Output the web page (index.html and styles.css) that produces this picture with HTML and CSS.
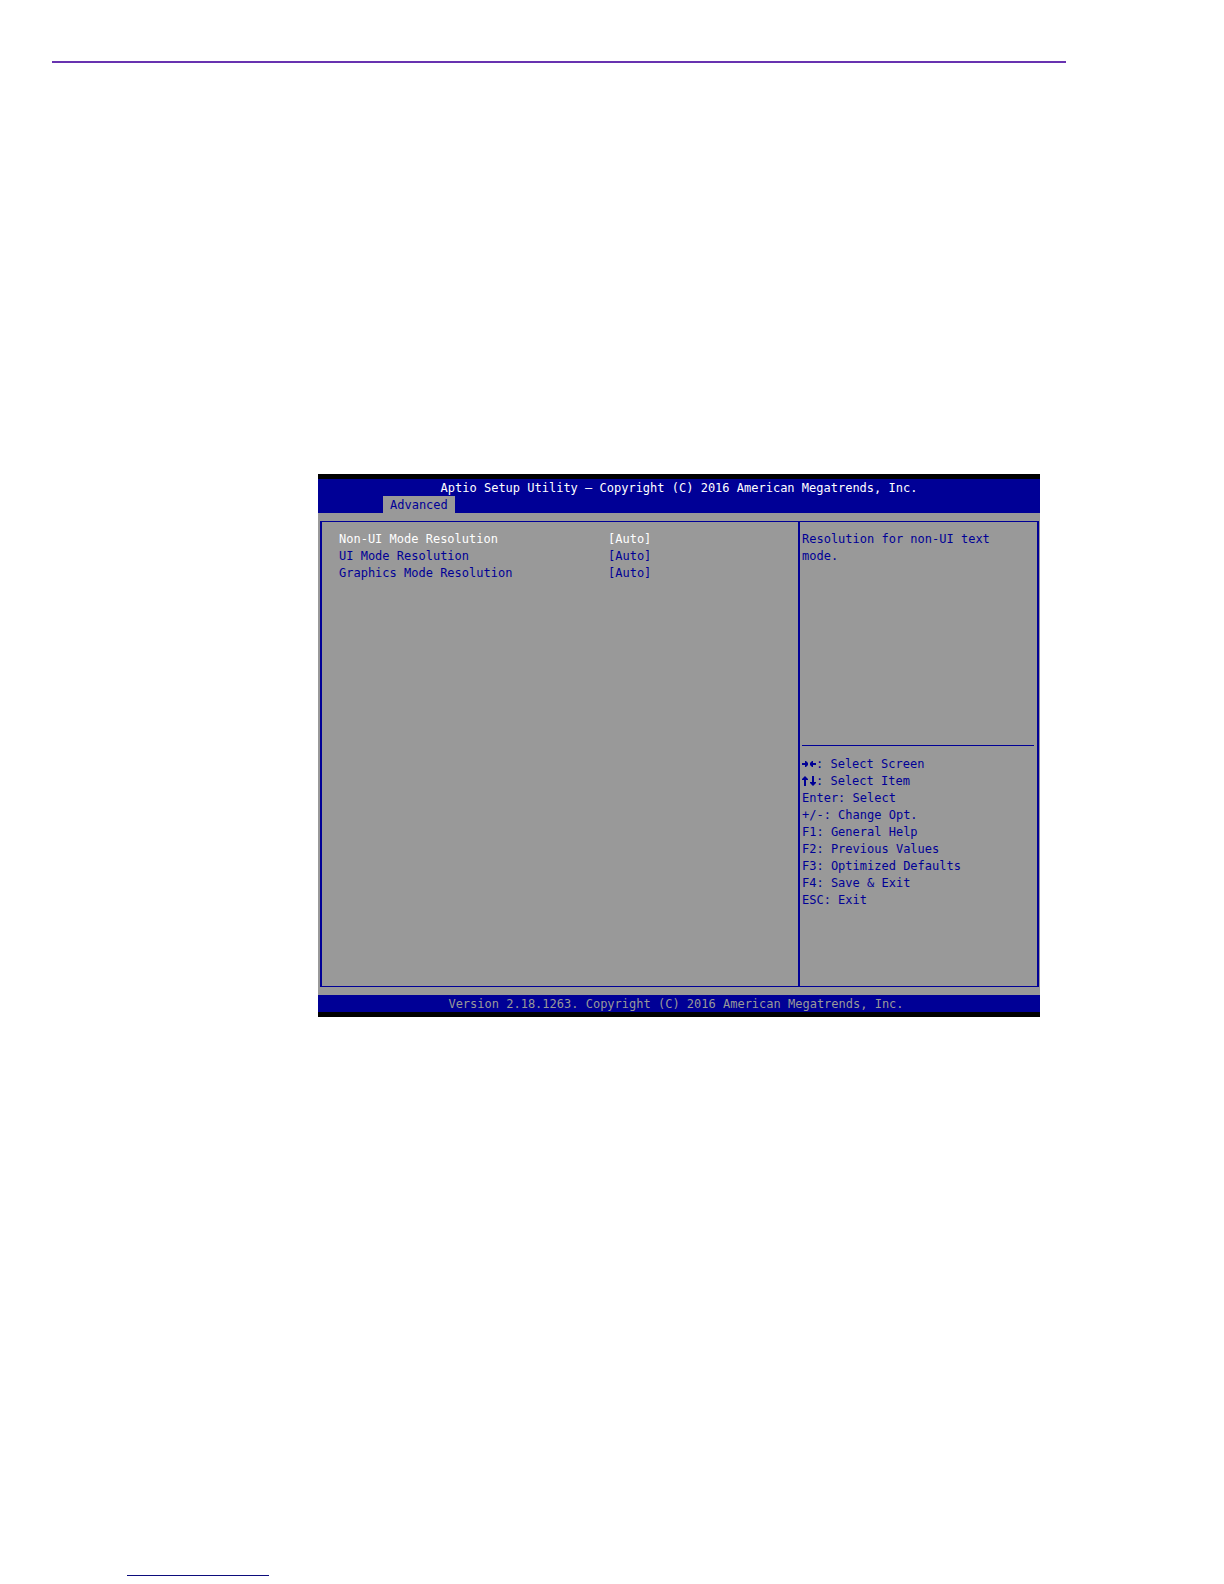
FILE: index.html
```html
<!DOCTYPE html>
<html lang="en">
<head>
    <meta charset="UTF-8">
    <meta name="viewport" content="width=device-width, initial-scale=1.0">
    <title>Aptio Setup Utility</title>
    <link rel="stylesheet" href="styles.css">
</head>
<body>
    <div class="page">
        <hr class="page-rule">

        <main class="bios">
            <header class="bios-header">
                <h1 class="bios-title">Aptio Setup Utility – Copyright (C) 2016 American Megatrends, Inc.</h1>
                <nav class="tabs">
                    <button type="button" class="tab">Advanced</button>
                </nav>
            </header>

            <div class="bios-body">
                <div class="frame">
                    <form class="options">
                        <div class="option selected">
                            <label for="non-ui-mode">Non-UI Mode Resolution</label>
                            <select id="non-ui-mode"><option>[Auto]</option></select>
                        </div>
                        <div class="option">
                            <label for="ui-mode">UI Mode Resolution</label>
                            <select id="ui-mode"><option>[Auto]</option></select>
                        </div>
                        <div class="option">
                            <label for="graphics-mode">Graphics Mode Resolution</label>
                            <select id="graphics-mode"><option>[Auto]</option></select>
                        </div>
                    </form>

                    <aside class="side">
                        <p class="help">Resolution for non-UI text<br>mode.</p>
                        <ul class="keys">
                            <li><svg class="arrows" viewBox="0 0 14 12" aria-hidden="true"><path d="M0 4h3V2h1l2 2v2L4 8H3V6H0zM14 4h-3V2h-1L8 4v2l2 2h1V6h3z"/></svg>: Select Screen</li>
                            <li><svg class="arrows" viewBox="0 0 14 12" aria-hidden="true"><path d="M2 10V4H0V3l3-3 3 3v1H4v6zM10 0h2v6h2v1l-3 3-3-3V6h2z"/></svg>: Select Item</li>
                            <li>Enter: Select</li>
                            <li>+/-: Change Opt.</li>
                            <li>F1: General Help</li>
                            <li>F2: Previous Values</li>
                            <li>F3: Optimized Defaults</li>
                            <li>F4: Save &amp; Exit</li>
                            <li>ESC: Exit</li>
                        </ul>
                    </aside>
                </div>
            </div>

            <footer class="bios-footer">Version 2.18.1263. Copyright (C) 2016 American Megatrends, Inc.</footer>
        </main>

        <hr class="note-rule">
    </div>
</body>
</html>
```

FILE: styles.css
```css
* {
    box-sizing: border-box;
}

body {
    margin: 0;
    background-color: #fff;
    font-family: "DejaVu Sans Mono", monospace;
    font-size: 12px;
    line-height: 17px;
}

.page {
    display: flex;
    flex-direction: column;
    min-height: 100vh;
    padding: 61px 158px 8px 52px;
}

.page-rule {
    width: 100%;
    margin: 0;
    border: 0;
    border-top: 2px solid #6833b0;
}

.note-rule {
    width: 142px;
    margin: auto 0 0 75px;
    border: 0;
    border-top: 1px solid #0c0c7c;
}

/* setup screen */
.bios {
    margin: 411px 26px 0 266px;
    border-top: 5px solid #000;
    border-bottom: 5px solid #000;
    background-color: #999;
    color: #000096;
}

.bios-header {
    background-color: #000096;
}

.bios-title {
    margin: 0;
    padding-top: 2px;
    color: #fff;
    font-size: 12px;
    font-weight: normal;
    line-height: 15px;
    text-align: center;
}

.tabs {
    display: flex;
    padding-left: 65px;
}

.tab {
    padding: 2px 7px 0;
    border: 0;
    background-color: #999;
    color: #000096;
    font: inherit;
    line-height: 15px;
}

.bios-body {
    padding: 8px 1px 8px 2px;
}

.frame {
    display: grid;
    grid-template-columns: 1fr 239px;
    min-height: 466px;
    border: 2px solid #000096;
    border-top-width: 1px;
    border-bottom-width: 1px;
}

.options {
    padding: 9px 17px;
}

.option {
    display: grid;
    grid-template-columns: 269px 1fr;
}

.option.selected {
    color: #fff;
}

.option select {
    appearance: none;
    justify-self: start;
    padding: 0;
    border: 0;
    background: none;
    color: inherit;
    font: inherit;
}

.side {
    padding: 9px 3px 9px 2px;
    border-left: 2px solid #000096;
}

.help {
    min-height: 215px;
    margin: 0;
    border-bottom: 1px solid #000096;
}

.keys {
    margin: 0;
    padding: 10px 0 0;
    list-style: none;
}

.arrows {
    width: 14px;
    height: 12px;
    fill: #000096;
    vertical-align: -3px;
}

.bios-footer {
    padding: 2px 6px 0 0;
    background-color: #000096;
    color: #999;
    line-height: 15px;
    text-align: center;
}
```
